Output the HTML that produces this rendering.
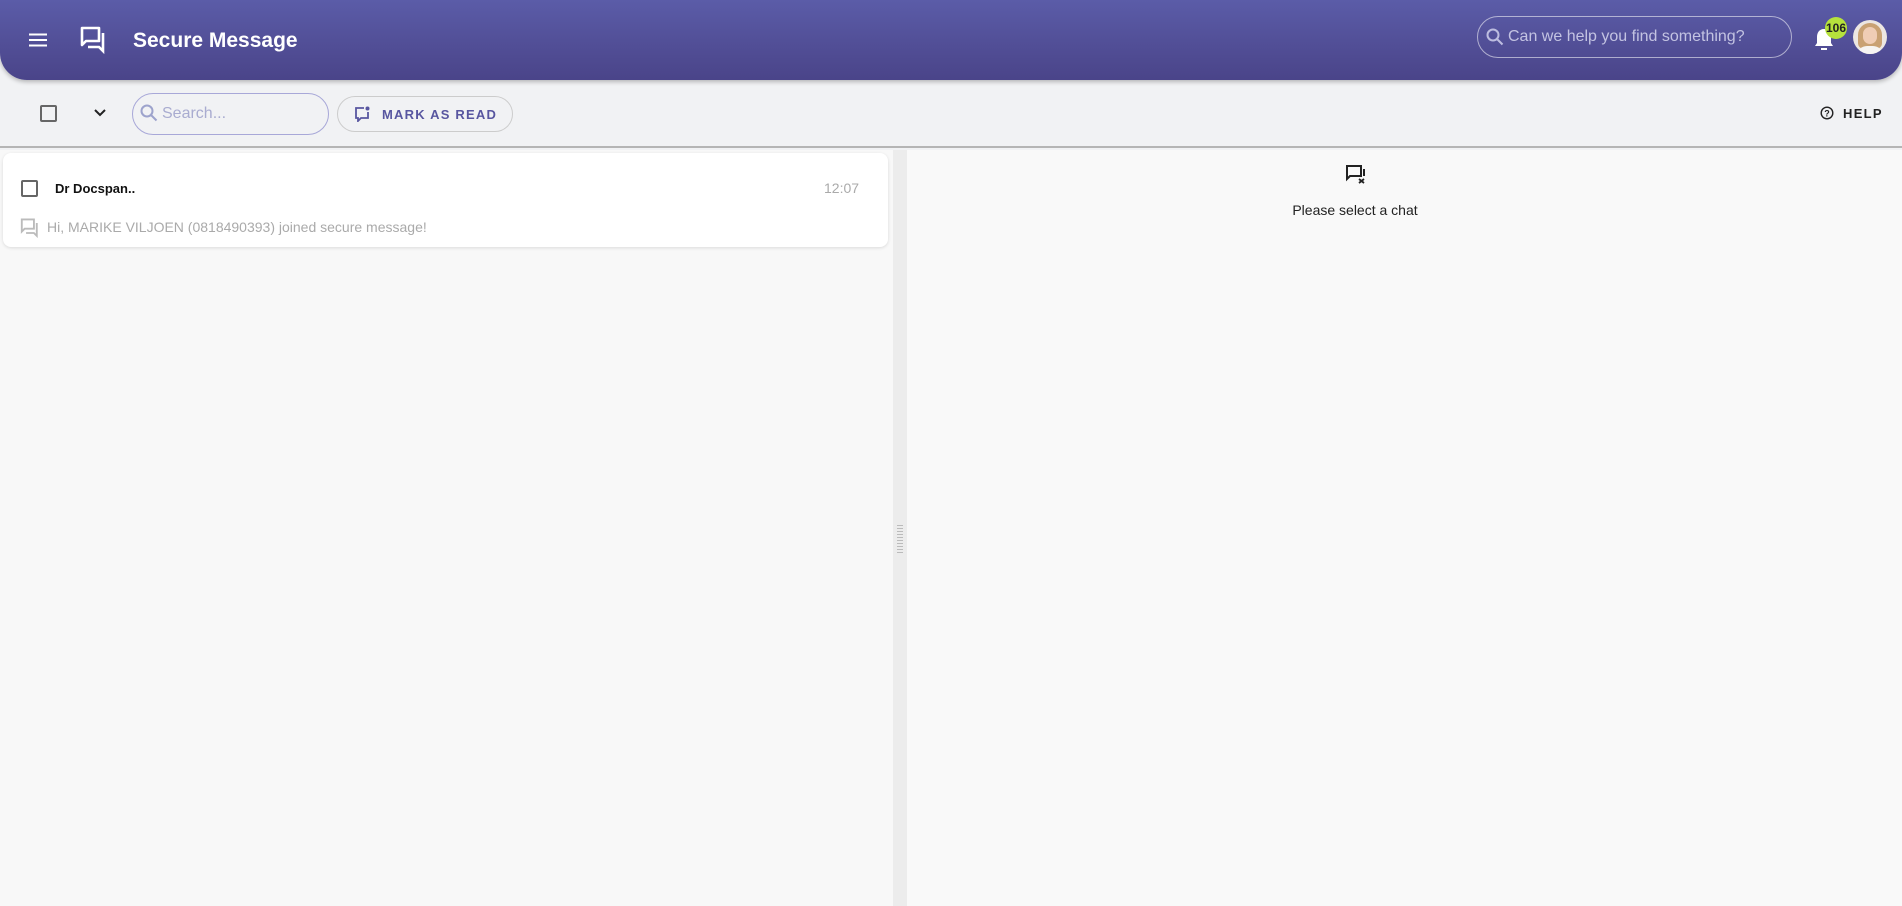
<!DOCTYPE html>
<html><head><style>
*{box-sizing:border-box;margin:0;padding:0}
body{width:1902px;height:906px;background:#f1f2f4;font-family:"Liberation Sans",sans-serif;position:relative;overflow:hidden}
.hdr{position:absolute;left:0;top:0;width:1902px;height:80px;background:linear-gradient(#5b5ca8,#4a4489);border-radius:0 0 27px 27px;box-shadow:0 2px 4px rgba(0,0,0,.25);z-index:2}
.abs{position:absolute}
.tb{position:absolute;top:80px;left:0;width:1902px;height:68px;background:#f1f2f4;border-bottom:2px solid #b5b5b5}
.left{position:absolute;top:150px;left:0;width:893px;height:756px;background:#f8f8f8}
.split{position:absolute;top:150px;left:893px;width:14px;height:756px;background:#ececec}
.right{position:absolute;top:150px;left:907px;width:995px;height:756px;background:#f9f9f9}
.card{position:absolute;left:3px;top:153px;width:885px;height:94px;background:#fff;border-radius:8px;box-shadow:0 1px 3px rgba(0,0,0,.12)}
.cb{position:absolute;width:17px;height:17px;border:2px solid #666;border-radius:2px}
</style></head><body>
<div class="hdr">
 <svg class="abs" style="left:29px;top:33px" width="18" height="14"><path d="M0 1.5H18M0 7H18M0 12.5H18" stroke="#fff" stroke-width="2"/></svg>
 <svg class="abs" style="left:80px;top:26px" width="27" height="28" viewBox="0 0 27 28"><path d="M2 2H19V15H6L2 19Z" fill="none" stroke="#fff" stroke-width="2.6" stroke-linejoin="round"/><path d="M23 7V25L19 21H8" fill="none" stroke="#fff" stroke-width="2.6"/></svg>
 <div class="abs" style="left:133px;top:29px;color:#fff;font-size:21px;font-weight:bold">Secure Message</div>
 <div class="abs" style="left:1477px;top:16px;width:315px;height:42px;border:1px solid rgba(255,255,255,.55);border-radius:21px"></div>
 <svg class="abs" style="left:1486px;top:28px" width="18" height="18"><circle cx="7" cy="7" r="5.5" fill="none" stroke="#bdbde0" stroke-width="2"/><path d="M11 11L16.5 16.5" stroke="#bdbde0" stroke-width="2"/></svg>
 <div class="abs" style="left:1508px;top:28px;color:#c3c3e2;font-size:16px">Can we help you find something?</div>
 <svg class="abs" style="left:1814px;top:28px" width="20" height="24"><path d="M10 1C5 1 3 5 3 9V15L1 18H19L17 15V9C17 5 15 1 10 1Z M7 20H13V22H7Z" fill="#fff"/></svg>
 <div class="abs" style="left:1825px;top:17px;width:22px;height:22px;border-radius:11px;background:#b6e23c;color:#222;font-size:12px;font-weight:bold;text-align:center;line-height:22px">106</div>
 <div class="abs" style="left:1853px;top:20px;width:34px;height:34px;border-radius:17px;overflow:hidden;background:#ece6e2">
  <div class="abs" style="left:5px;top:3px;width:24px;height:26px;border-radius:12px 12px 6px 6px;background:#c9a173"></div>
  <div class="abs" style="left:10px;top:7px;width:14px;height:17px;border-radius:7px;background:#f0cdb5"></div>
  <div class="abs" style="left:4px;top:26px;width:26px;height:12px;border-radius:10px 10px 0 0;background:#f6f4f2"></div>
 </div>
</div>
<div class="tb">
 <div class="cb" style="left:40px;top:25px"></div>
 <svg class="abs" style="left:94px;top:29px" width="12" height="8"><path d="M1 1L6 6L11 1" fill="none" stroke="#222" stroke-width="2"/></svg>
 <div class="abs" style="left:132px;top:13px;width:197px;height:42px;border:1px solid #a8a8d8;border-radius:21px"></div>
 <svg class="abs" style="left:140px;top:24px" width="18" height="18"><circle cx="7" cy="7" r="5.5" fill="none" stroke="#9da3cc" stroke-width="2"/><path d="M11 11L16.5 16.5" stroke="#9da3cc" stroke-width="2"/></svg>
 <div class="abs" style="left:162px;top:25px;color:#a9acd0;font-size:16px">Search...</div>
 <div class="abs" style="left:337px;top:16px;width:176px;height:36px;border:1px solid #ccc;border-radius:18px"></div>
 <svg class="abs" style="left:354px;top:26px" width="16" height="16"><path d="M10 2H2V12H4V15L7 12H14V6" fill="none" stroke="#5856a0" stroke-width="1.8"/><circle cx="13.5" cy="2.5" r="2" fill="#5856a0"/></svg>
 <div class="abs" style="left:382px;top:27px;color:#5856a0;font-size:13px;font-weight:bold;letter-spacing:1.2px">MARK AS READ</div>
 <svg class="abs" style="left:1820px;top:26px" width="14" height="14"><circle cx="7" cy="7" r="5.8" fill="none" stroke="#222" stroke-width="1.4"/><text x="7" y="10.5" font-size="9" text-anchor="middle" font-family="Liberation Sans" font-weight="bold" fill="#222">?</text></svg>
 <div class="abs" style="left:1843px;top:26px;color:#222;font-size:13px;font-weight:bold;letter-spacing:1.3px">HELP</div>
</div>
<div class="left"></div>
<div class="split"><div class="abs" style="left:4px;top:375px;width:6px;height:30px;background:repeating-linear-gradient(#bbb 0 1px,transparent 1px 3px)"></div></div>
<div class="right">
 <svg class="abs" style="left:439px;top:15px" width="20" height="19"><path d="M1 1H15V11H4L1 14Z" fill="none" stroke="#222" stroke-width="2"/><path d="M18 4V11" stroke="#222" stroke-width="2"/><path d="M13 14L18 18M18 14L13 18" stroke="#222" stroke-width="1.8"/></svg>
 <div class="abs" style="left:383px;top:52px;width:130px;text-align:center;color:#222;font-size:14px">Please select a chat</div>
</div>
<div class="card">
 <div class="cb" style="left:18px;top:27px"></div>
 <div class="abs" style="left:52px;top:28px;font-size:13px;font-weight:bold;color:#111">Dr Docspan..</div>
 <div class="abs" style="left:821px;top:27px;font-size:14px;color:#aaa">12:07</div>
 <svg class="abs" style="left:17px;top:65px" width="20" height="20" viewBox="0 0 27 28"><path d="M2 2H19V15H6L2 19Z" fill="none" stroke="#bbb" stroke-width="2.6"/><path d="M23 7V25L19 21H8" fill="none" stroke="#bbb" stroke-width="2.6"/></svg>
 <div class="abs" style="left:44px;top:66px;font-size:14px;color:#aaa">Hi, MARIKE VILJOEN (0818490393) joined secure message!</div>
</div>
</body></html>
